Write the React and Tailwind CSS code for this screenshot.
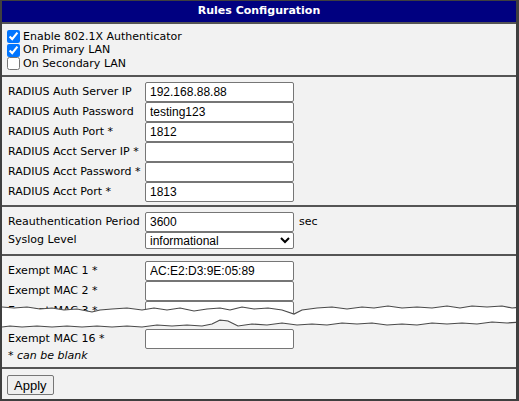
import React from 'react';

const labelFont = { fontFamily: 'Tahoma, "DejaVu Sans", Verdana, sans-serif' };
const fieldFont = { fontFamily: '"Liberation Sans", Arial, sans-serif' };

const topEdge = [
  [0, 306], [12, 307], [25, 306], [38, 308], [50, 307], [62, 309], [75, 308], [90, 311], [98, 309],
  [110, 308], [125, 307], [140, 309], [152, 307], [165, 309], [178, 307], [192, 310], [205, 308],
  [218, 307], [228, 309], [240, 306], [252, 308], [266, 307], [280, 309], [292, 313], [300, 309],
  [315, 307], [330, 306], [345, 308], [360, 306], [372, 307], [386, 305], [400, 307], [415, 306],
  [430, 307], [445, 305], [458, 307], [470, 305], [485, 306], [500, 305], [510, 307], [519, 306],
];

const bottomEdge = [
  [519, 321], [505, 322], [490, 321], [475, 323], [460, 322], [445, 323], [430, 322], [415, 324],
  [400, 323], [385, 324], [370, 322], [355, 323], [340, 322], [325, 324], [310, 323], [295, 324],
  [280, 322], [265, 324], [250, 323], [236, 325], [226, 320], [218, 319], [210, 323], [200, 325],
  [185, 324], [170, 325], [155, 324], [140, 326], [125, 325], [110, 326], [95, 325], [80, 326],
  [65, 325], [50, 326], [35, 325], [20, 326], [8, 325], [0, 326],
];

const toLine = (pts) => pts.map(([x, y]) => `${x},${y - 300}`).join(' ');

// white "torn paper" band marking the skipped MAC rows
const TornEdge = () => (
  <svg className="absolute left-0 top-[300px] pointer-events-none" width="519" height="30" viewBox="0 0 519 30">
    <polygon points={`${toLine(topEdge)} ${toLine(bottomEdge)}`} fill="#ffffff" />
    <polyline points={toLine(topEdge)} fill="none" stroke="#4a4a4a" strokeWidth="1.2" />
    <polyline points={toLine(bottomEdge)} fill="none" stroke="#4a4a4a" strokeWidth="1.2" />
  </svg>
);

const TextBox = ({ value = '' }) => (
  <input
    type="text"
    readOnly
    value={value}
    className="w-[149px] h-[20px] px-[4px] border border-[#767676] rounded-[2px] bg-white text-[12px] text-black outline-none"
    style={fieldFont}
  />
);

const Row = ({ label, star, children, extra }) => (
  <div className="flex items-center h-[20px]">
    <div className="w-[137px] text-[11px] text-black whitespace-nowrap" style={labelFont}>
      {label}
      {star && <span> *</span>}
    </div>
    {children}
    {extra && <span className="ml-[5px] text-[11px]" style={labelFont}>{extra}</span>}
  </div>
);

const Check = ({ label, checked }) => (
  <label className="flex items-center h-[13.5px] gap-[3px] text-[11px] text-black" style={labelFont}>
    <input type="checkbox" readOnly checked={checked} className="m-0 w-[13px] h-[13px] accent-[#0075ff]" />
    {label}
  </label>
);

export default function App() {
  return (
    <div className="relative w-[519px] h-[401px] bg-[#f2f2f2] border-2 border-[#3f3f3f] border-t-[1px] border-r-[3px] overflow-hidden">
      <div
        className="h-[21px] bg-[#000080] text-white font-bold text-[11px] flex items-center justify-center"
        style={labelFont}
      >
        Rules Configuration
      </div>

      <div className="border-t-2 border-[#555] pt-[6px] px-[5px] h-[53px]">
        <Check label="Enable 802.1X Authenticator" checked />
        <Check label="On Primary LAN" checked />
        <Check label="On Secondary LAN" />
      </div>

      <div className="border-t-2 border-[#555] pt-[5px] px-[6px] h-[130px]">
        <Row label="RADIUS Auth Server IP"><TextBox value="192.168.88.88" /></Row>
        <Row label="RADIUS Auth Password"><TextBox value="testing123" /></Row>
        <Row label="RADIUS Auth Port" star><TextBox value="1812" /></Row>
        <Row label="RADIUS Acct Server IP" star><TextBox /></Row>
        <Row label="RADIUS Acct Password" star><TextBox /></Row>
        <Row label="RADIUS Acct Port" star><TextBox value="1813" /></Row>
      </div>

      <div className="border-t-2 border-[#555] pt-[5px] px-[6px] h-[49px]">
        <Row label="Reauthentication Period" extra="sec"><TextBox value="3600" /></Row>
        <div className="flex items-center h-[17px]">
          <div className="w-[137px] text-[11px]" style={labelFont}>Syslog Level</div>
          <select
            value="informational"
            onChange={() => {}}
            className="w-[149px] h-[17px] border border-[#767676] rounded-[2px] bg-white text-[12px] text-black"
            style={fieldFont}
          >
            <option value="informational">informational</option>
          </select>
        </div>
      </div>

      <div className="border-t-2 border-[#555] pt-[5px] px-[6px] h-[113px]">
        <Row label="Exempt MAC 1" star><TextBox value="AC:E2:D3:9E:05:89" /></Row>
        <Row label="Exempt MAC 2" star><TextBox /></Row>
        <div className="h-[28px] overflow-hidden">
          <Row label="Exempt MAC 3" star><TextBox /></Row>
        </div>
        <Row label="Exempt MAC 16" star><TextBox /></Row>
        <div className="h-[14px] flex items-center text-[11px] italic" style={labelFont}>* can be blank</div>
      </div>

      <div className="border-t-2 border-[#555] pt-[3px] px-[5px]">
        <button
          type="button"
          className="h-[20px] px-[6px] border border-[#767676] rounded-[2px] bg-[#efefef] text-[13px] text-black"
          style={fieldFont}
        >
          Apply
        </button>
      </div>

      <TornEdge />
    </div>
  );
}
